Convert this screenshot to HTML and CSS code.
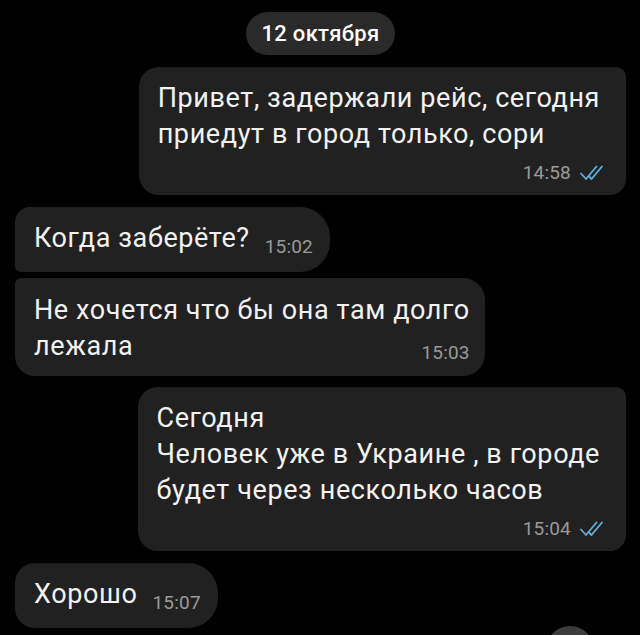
FILE: index.html
```html
<html lang="ru">
<head>
    <meta charset="UTF-8">
    <meta name="viewport" content="width=device-width, initial-scale=1.0">
    <title>Чат</title>
    <link rel="stylesheet" href="styles.css">
</head>
<body>
<div class="screen">
<div class="chat">
    <div class="date-pill">12 октября</div>

    <div class="bubble out first">
        <div class="text">Привет, задержали рейс, сегодня<br>приедут в город только, сори</div>
        <div class="meta">
            <span class="time">14:58</span>
            <svg class="checks" width="28" height="18" viewBox="0 0 28 18">
                <path d="M2 9.5 L7 15 L17.5 2.5" />
                <path d="M10.5 13 L12.5 15 L23 2.5" />
            </svg>
        </div>
    </div>

    <div class="bubble in top">
        <span class="text">Когда заберёте?</span><span class="time inline">15:02</span>
    </div>

    <div class="bubble in bottom">
        <span class="text">Не хочется что бы она там долго<br>лежала</span><span class="time inline">15:03</span>
    </div>

    <div class="bubble out">
        <div class="text">Сегодня<br>Человек уже в Украине , в городе<br>будет через несколько часов</div>
        <div class="meta">
            <span class="time">15:04</span>
            <svg class="checks" width="28" height="18" viewBox="0 0 28 18">
                <path d="M2 9.5 L7 15 L17.5 2.5" />
                <path d="M10.5 13 L12.5 15 L23 2.5" />
            </svg>
        </div>
    </div>

    <div class="bubble in single">
        <span class="text">Хорошо</span><span class="time inline">15:07</span>
    </div>

    <div class="bubble in next"></div>
</div>
<div class="scroll-down"></div>
</div>
</body>
</html>
```

FILE: styles.css
```css
body {
    margin: 0;
    background-color: #000;
    font-family: Roboto, "Noto Sans", sans-serif;
    color: #f2f2f2;
}

.screen {
    position: relative;
    height: 635px;
    overflow: hidden;
}

.chat {
    display: flex;
    flex-direction: column;
    padding: 12px 14px 0 15px;
}

.date-pill {
    align-self: center;
    background-color: #2a2a2a;
    border-radius: 22px;
    height: 43px;
    line-height: 43px;
    padding: 0 15px;
    font-size: 22px;
    font-weight: 500;
    letter-spacing: 0.3px;
    color: #fff;
    margin-bottom: 12px;
}

.bubble {
    background-color: #212121;
    font-size: 27px;
    letter-spacing: 0.6px;
    line-height: 36px;
    display: flow-root;
    margin-bottom: 12px;
}

.bubble.out {
    align-self: flex-end;
    padding: 13px 26px 10px 19px;
    border-radius: 20px 10px 16px 20px;
}

.bubble.in {
    align-self: flex-start;
    padding: 13px 17px 15px 19px;
}

.bubble.top {
    border-radius: 15px 30px 30px 6px;
    margin-bottom: 6px;
}

.bubble.bottom {
    padding: 14px 15px 12px 19px;
    border-radius: 6px 22px 22px 20px;
    margin-bottom: 11px;
}

.bubble.single {
    border-radius: 20px 30px 30px 20px;
    margin-bottom: 7px;
}

.bubble.next {
    width: 403px;
    height: 40px;
    padding: 0;
    margin: 0;
    border-radius: 20px 30px 0 0;
}

.meta {
    display: flex;
    justify-content: flex-end;
    align-items: center;
    gap: 8px;
    height: 24px;
    margin-top: 9px;
    margin-right: -7px;
}

.time {
    font-size: 19px;
    letter-spacing: 0.2px;
    line-height: 20px;
    color: #9a9a9a;
}

.time.inline {
    float: right;
    margin: 17px 0 0 15px;
}

.bubble.bottom .time.inline {
    margin-top: 15px;
}

.checks {
    fill: none;
    stroke: #5fb0dc;
    stroke-width: 1.8;
    stroke-linecap: round;
    stroke-linejoin: round;
}

.scroll-down {
    position: absolute;
    left: 546px;
    top: 626px;
    width: 48px;
    height: 48px;
    border-radius: 50%;
    background-color: #3c3c3c;
}
```
